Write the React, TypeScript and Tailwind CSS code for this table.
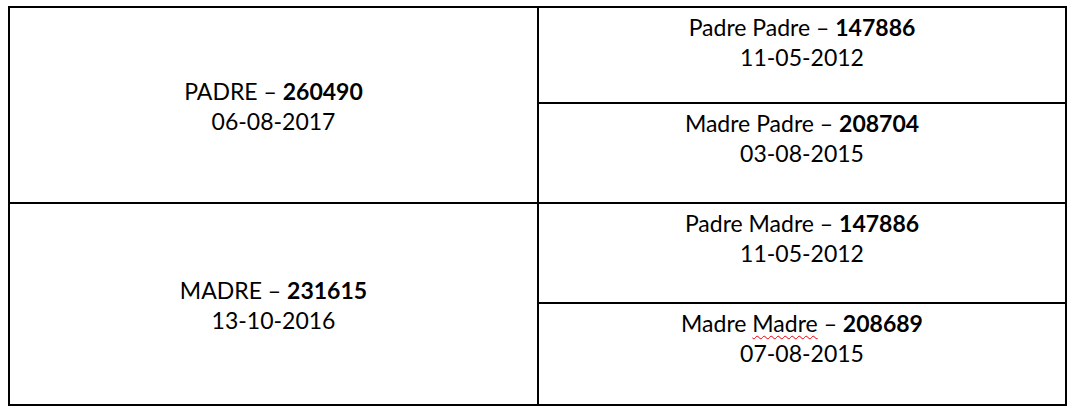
const font = { fontFamily: '"Lato", "Open Sans", sans-serif' };

type Entry = { name: string; code: string; date: string; wavy?: boolean };

function Label({ entry }: { entry: Entry }) {
  const parts = entry.name.split(" ");
  return (
    <div className="text-center text-[23px] leading-[30px] text-black">
      <div>
        {entry.wavy ? (
          <>
            {parts[0]}{" "}
            <span className="underline decoration-wavy decoration-red-600 decoration-1 underline-offset-[3px]">{parts[1]}</span>
          </>
        ) : (
          entry.name
        )}{" "}
        – <span className="font-bold">{entry.code}</span>
      </div>
      <div>{entry.date}</div>
    </div>
  );
}

const rows: { main: Entry; subs: [Entry, Entry]; h: [string, string] }[] = [
  {
    main: { name: "PADRE", code: "260490", date: "06-08-2017" },
    subs: [
      { name: "Padre Padre", code: "147886", date: "11-05-2012" },
      { name: "Madre Padre", code: "208704", date: "03-08-2015" },
    ],
    h: ["h-[196px]", "h-[96px]"],
  },
  {
    main: { name: "MADRE", code: "231615", date: "13-10-2016" },
    subs: [
      { name: "Padre Madre", code: "147886", date: "11-05-2012" },
      { name: "Madre Madre", code: "208689", date: "07-08-2015", wavy: true },
    ],
    h: ["h-[200px]", "h-[100px]"],
  },
];

export default function App() {
  return (
    <div className="w-[1074px] h-[412px] bg-white pt-[6px] pl-[8px]" style={font}>
      <div className="w-[1059px] border-2 border-black">
        {rows.map((row, i) => (
          <div key={i} className={`flex ${row.h[0]} ${i === 0 ? "border-b-2 border-black" : ""}`}>
            <div className="w-[529px] border-r-2 border-black flex items-center justify-center pt-[2px]">
              <Label entry={row.main} />
            </div>
            <div className="flex-1 flex flex-col">
              <div className={`${row.h[1]} border-b-2 border-black pt-[4px]`}>
                <Label entry={row.subs[0]} />
              </div>
              <div className="flex-1 pt-[4px]">
                <Label entry={row.subs[1]} />
              </div>
            </div>
          </div>
        ))}
      </div>
    </div>
  );
}
